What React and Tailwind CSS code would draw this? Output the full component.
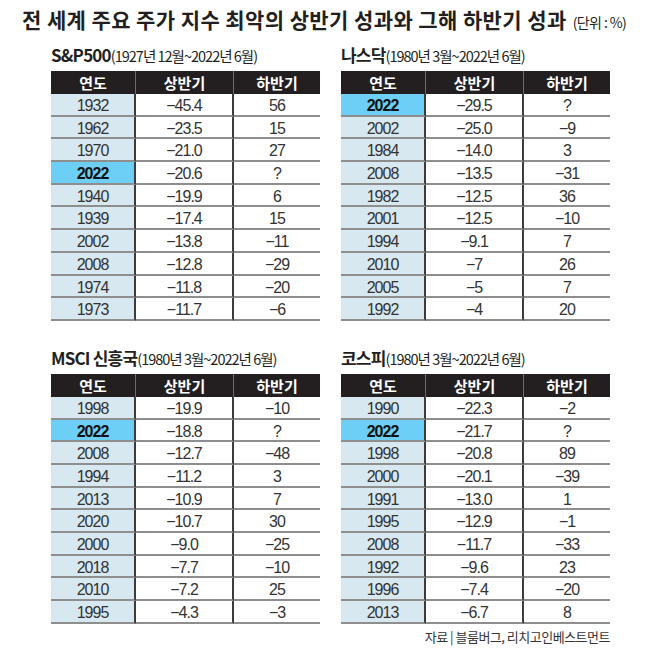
const tables = [
  {
    name: 'S&P500',
    range: '(1927년 12월~2022년 6월)',
    rows: [
      ['1932', '−45.4', '56'],
      ['1962', '−23.5', '15'],
      ['1970', '−21.0', '27'],
      ['2022', '−20.6', '?'],
      ['1940', '−19.9', '6'],
      ['1939', '−17.4', '15'],
      ['2002', '−13.8', '−11'],
      ['2008', '−12.8', '−29'],
      ['1974', '−11.8', '−20'],
      ['1973', '−11.7', '−6'],
    ],
  },
  {
    name: '나스닥',
    range: '(1980년 3월~2022년 6월)',
    rows: [
      ['2022', '−29.5', '?'],
      ['2002', '−25.0', '−9'],
      ['1984', '−14.0', '3'],
      ['2008', '−13.5', '−31'],
      ['1982', '−12.5', '36'],
      ['2001', '−12.5', '−10'],
      ['1994', '−9.1', '7'],
      ['2010', '−7', '26'],
      ['2005', '−5', '7'],
      ['1992', '−4', '20'],
    ],
  },
  {
    name: 'MSCI 신흥국',
    range: '(1980년 3월~2022년 6월)',
    rows: [
      ['1998', '−19.9', '−10'],
      ['2022', '−18.8', '?'],
      ['2008', '−12.7', '−48'],
      ['1994', '−11.2', '3'],
      ['2013', '−10.9', '7'],
      ['2020', '−10.7', '30'],
      ['2000', '−9.0', '−25'],
      ['2018', '−7.7', '−10'],
      ['2010', '−7.2', '25'],
      ['1995', '−4.3', '−3'],
    ],
  },
  {
    name: '코스피',
    range: '(1980년 3월~2022년 6월)',
    rows: [
      ['1990', '−22.3', '−2'],
      ['2022', '−21.7', '?'],
      ['1998', '−20.8', '89'],
      ['2000', '−20.1', '−39'],
      ['1991', '−13.0', '1'],
      ['1995', '−12.9', '−1'],
      ['2008', '−11.7', '−33'],
      ['1992', '−9.6', '23'],
      ['1996', '−7.4', '−20'],
      ['2013', '−6.7', '8'],
    ],
  },
];

const cell = "h-[22.7px] border-b-2 border-b-[#8e8e8e] text-[16px] leading-[23px] tracking-[-1px] font-['Liberation_Sans','Noto_Sans_CJK_KR',sans-serif]";

function StockTable({ name, range, rows }) {
  return (
    <div>
      <div className="flex items-baseline h-[19px] leading-[19px] mb-[7px] text-[#231f20] font-['Noto_Sans_CJK_KR','Noto_Sans',sans-serif]">
        <span className="text-[17px] font-bold tracking-[-0.8px]">{name}</span>
        <span className="text-[14.5px] tracking-[-1px]">{range}</span>
      </div>
      <div className="grid grid-cols-[85px_98px_86px] text-center">
        <div className="h-[23px] bg-[#231f20] border-r border-[#6b6b6b] text-white text-[15px] font-bold leading-[23px] font-['Noto_Sans_CJK_KR',sans-serif]">연도</div>
        <div className="h-[23px] bg-[#231f20] border-r border-[#6b6b6b] text-white text-[15px] font-bold leading-[23px] font-['Noto_Sans_CJK_KR',sans-serif]">상반기</div>
        <div className="h-[23px] bg-[#231f20] text-white text-[15px] font-bold leading-[23px] font-['Noto_Sans_CJK_KR',sans-serif]">하반기</div>
        {rows.map(([year, first, second]) => {
          const now = year === '2022';
          return [
            <div
              key={year + 'a'}
              className={`${cell} border-r-2 border-r-[#3c3c3c] ${now ? 'bg-[#6dcff6] font-bold text-[#111]' : 'bg-[#d7e8f1] text-[#333]'}`}
            >
              {year}
            </div>,
            <div key={year + 'b'} className={`${cell} border-r-2 border-r-[#3c3c3c] bg-white text-[#333]`}>
              {first}
            </div>,
            <div key={year + 'c'} className={`${cell} bg-white text-[#333]`}>
              {second}
            </div>,
          ];
        })}
      </div>
    </div>
  );
}

export default function App() {
  return (
    <div className="w-[650px] h-[650px] bg-white pt-[4px] px-[22px] font-['Noto_Sans_CJK_KR','Noto_Sans',sans-serif]">
      <div className="flex items-baseline h-[28px] text-[#231f20]">
        <h1 className="text-[21px] font-bold tracking-[0.4px]">
          전 세계 주요 주가 지수 최악의 상반기 성과와 그해 하반기 성과
        </h1>
        <span className="ml-[6px] text-[14px] tracking-[-0.6px]">(단위 : %)</span>
      </div>
      <div className="pl-[29px] pt-[13px] grid grid-cols-[269px_269px] gap-x-[21px] gap-y-[27px]">
        {tables.map((t) => (
          <StockTable key={t.name} {...t} />
        ))}
      </div>
      <div className="w-[588px] text-right mt-[3px] text-[13px] tracking-[-0.5px] text-[#333]">
        자료 | 블룸버그, 리치고인베스트먼트
      </div>
    </div>
  );
}
